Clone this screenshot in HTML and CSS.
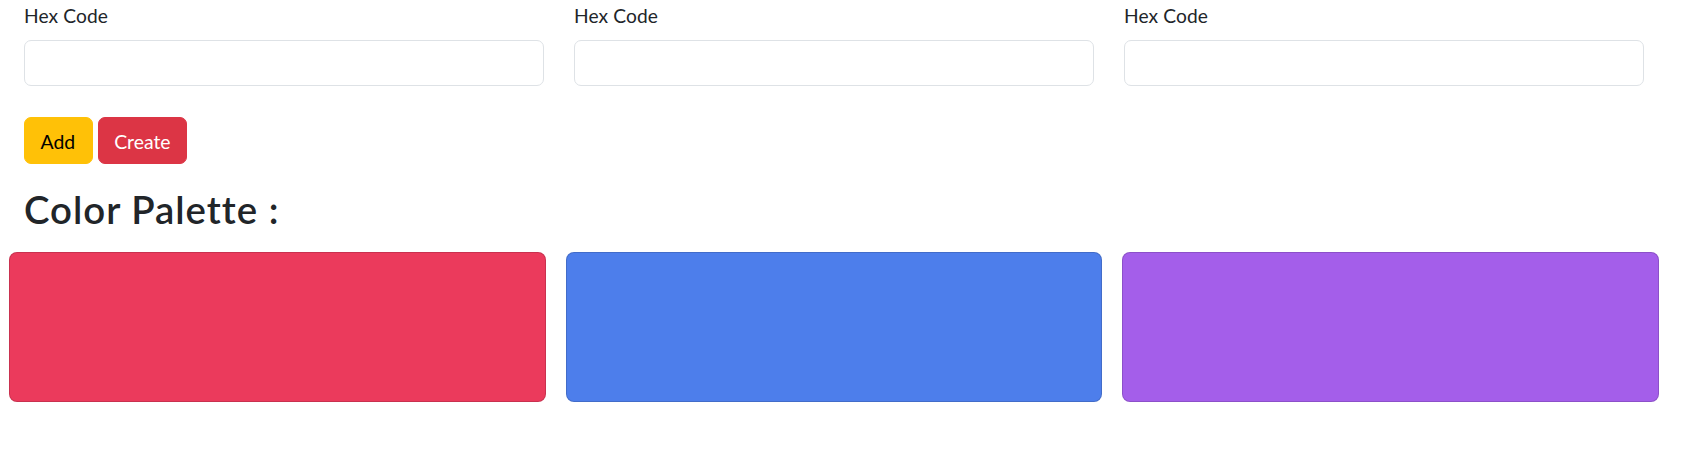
FILE: index.html
```html
<!DOCTYPE html>
<html lang="en">
<head>
<meta charset="utf-8">
<title>Color Palette</title>
<link rel="stylesheet" href="styles.css">
</head>
<body>
  <div class="inputs">
    <div class="field">
      <label class="label" for="hex1">Hex Code</label>
      <input class="control" id="hex1" type="text">
    </div>
    <div class="field">
      <label class="label" for="hex2">Hex Code</label>
      <input class="control" id="hex2" type="text">
    </div>
    <div class="field">
      <label class="label" for="hex3">Hex Code</label>
      <input class="control" id="hex3" type="text">
    </div>
  </div>
  <div class="actions">
    <button class="btn btn-warning" type="button">Add</button>
    <button class="btn btn-danger" type="button">Create</button>
  </div>
  <h2 class="title">Color Palette :</h2>
  <div class="palette">
    <div class="swatch swatch-red"></div>
    <div class="swatch swatch-blue"></div>
    <div class="swatch swatch-purple"></div>
  </div>
</body>
</html>
```

FILE: styles.css
```css
* { box-sizing: border-box; }

body {
  margin: 0;
  font-family: "Lato", "Open Sans", sans-serif;
  color: #212529;
  background: #fff;
}

.inputs {
  display: grid;
  grid-template-columns: repeat(3, 520px);
  column-gap: 30px;
  padding: 2px 0 0 24px;
}

.label {
  display: block;
  font-size: 19.2px;
  line-height: 28.8px;
  margin-bottom: 9.6px;
  letter-spacing: 0.1px;
}

.control {
  display: block;
  width: 100%;
  height: 46px;
  border: 1px solid #dee2e6;
  border-radius: 7px;
  background: #fff;
  font: inherit;
  font-size: 19.2px;
}

.actions {
  display: flex;
  gap: 5px;
  padding-left: 24px;
  margin-top: 30.6px;
}

.btn {
  font-family: inherit;
  font-size: 19.4px;
  line-height: 28.8px;
  padding: 10px 15.5px 6px;
  border: 1px solid transparent;
  border-radius: 7px;
  cursor: pointer;
}

.btn-warning {
  background: #ffc107;
  border-color: #ffc107;
  color: #000;
  padding-right: 16.5px;
}

.btn-danger {
  background: #dc3545;
  border-color: #dc3545;
  color: #fff;
}

.title {
  margin: 22px 0 20px;
  padding-left: 24px;
  font-size: 38.4px;
  line-height: 1.2;
  font-weight: 600;
  letter-spacing: 1px;
}

.palette {
  display: grid;
  grid-template-columns: repeat(3, 1fr);
  column-gap: 20px;
  width: 1659px;
  padding-left: 9px;
}

.swatch {
  height: 150px;
  border-radius: 8px;
  border: 1px solid rgba(0, 0, 0, 0.14);
}

.swatch-red { background: #eb3a5c; }
.swatch-blue { background: #4d7eeb; }
.swatch-purple { background: #a45eea; }
```
